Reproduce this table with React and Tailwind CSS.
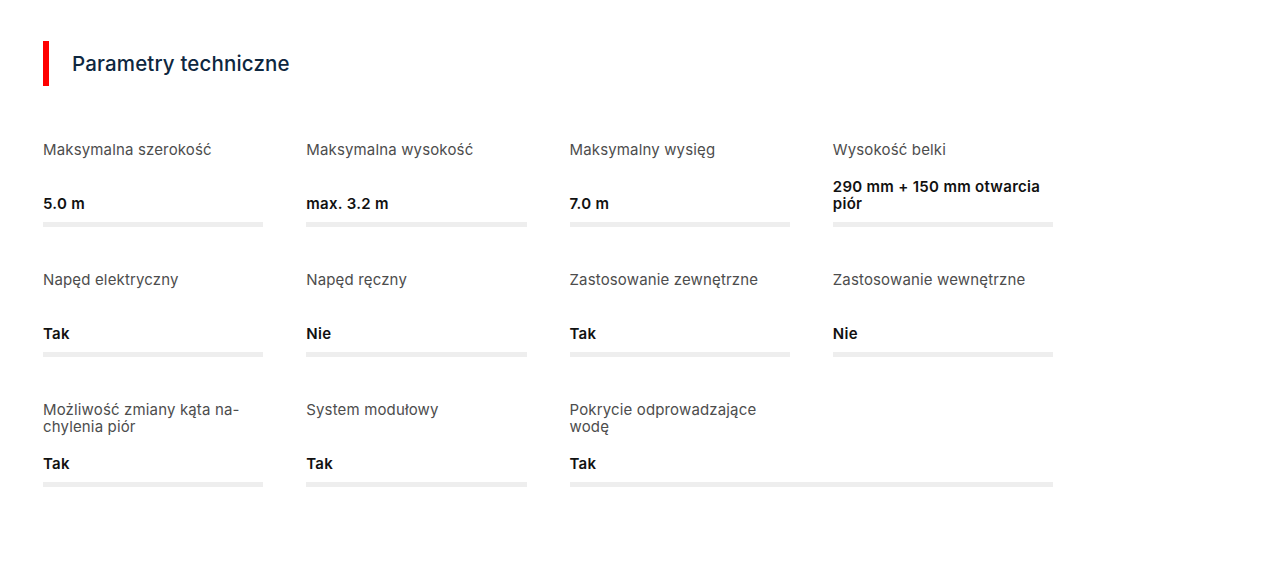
import React from "react";

const items = [
  { label: "Maksymalna szerokość", value: "5.0 m" },
  { label: "Maksymalna wysokość", value: "max. 3.2 m" },
  { label: "Maksymalny wysięg", value: "7.0 m" },
  { label: "Wysokość belki", value: "290 mm + 150 mm otwarcia piór" },
  { label: "Napęd elektryczny", value: "Tak" },
  { label: "Napęd ręczny", value: "Nie" },
  { label: "Zastosowanie zewnętrzne", value: "Tak" },
  { label: "Zastosowanie wewnętrzne", value: "Nie" },
  { value: "Tak", twoLine: ["Możliwość zmiany kąta na-", "chylenia piór"] },
  { label: "System modułowy", value: "Tak" },
  { value: "Tak", span: true, twoLine: ["Pokrycie odprowadzające", "wodę"] },
];

function Cell({ item }) {
  return (
    <div className={`flex h-[86px] flex-col ${item.span ? "col-span-2" : ""}`}>
      <div className="w-[220px] text-[15px] leading-[17px] tracking-[0.15px] text-[#4d4d4d]">
        {item.twoLine ? (
          <>
            {item.twoLine[0]}
            <br />
            {item.twoLine[1]}
          </>
        ) : (
          item.label
        )}
      </div>
      <div className="flex-1" />
      <div className="w-[220px] text-[15px] font-semibold leading-[17px] tracking-[0.3px] text-[#111111]">
        {item.value}
      </div>
      <div className="mt-[10px] h-[5px] bg-[#eeeeee]" />
    </div>
  );
}

export default function App() {
  return (
    <div
      className="min-h-[586px] bg-white pl-[43px] pt-[41px]"
      style={{ fontFamily: "Inter, 'Open Sans', sans-serif" }}
    >
      <div className="flex items-center">
        <div className="h-[45px] w-[6px] bg-[#ff0000]" />
        <h2 className="ml-[23px] pt-[2px] text-[20.5px] font-medium tracking-[0.15px] text-[#0e2740]">
          Parametry techniczne
        </h2>
      </div>
      <div className="mt-[55px] grid w-[1010px] grid-cols-4 gap-x-[43px] gap-y-[44px]">
        {items.map((it, i) => (
          <Cell key={i} item={it} />
        ))}
      </div>
    </div>
  );
}
